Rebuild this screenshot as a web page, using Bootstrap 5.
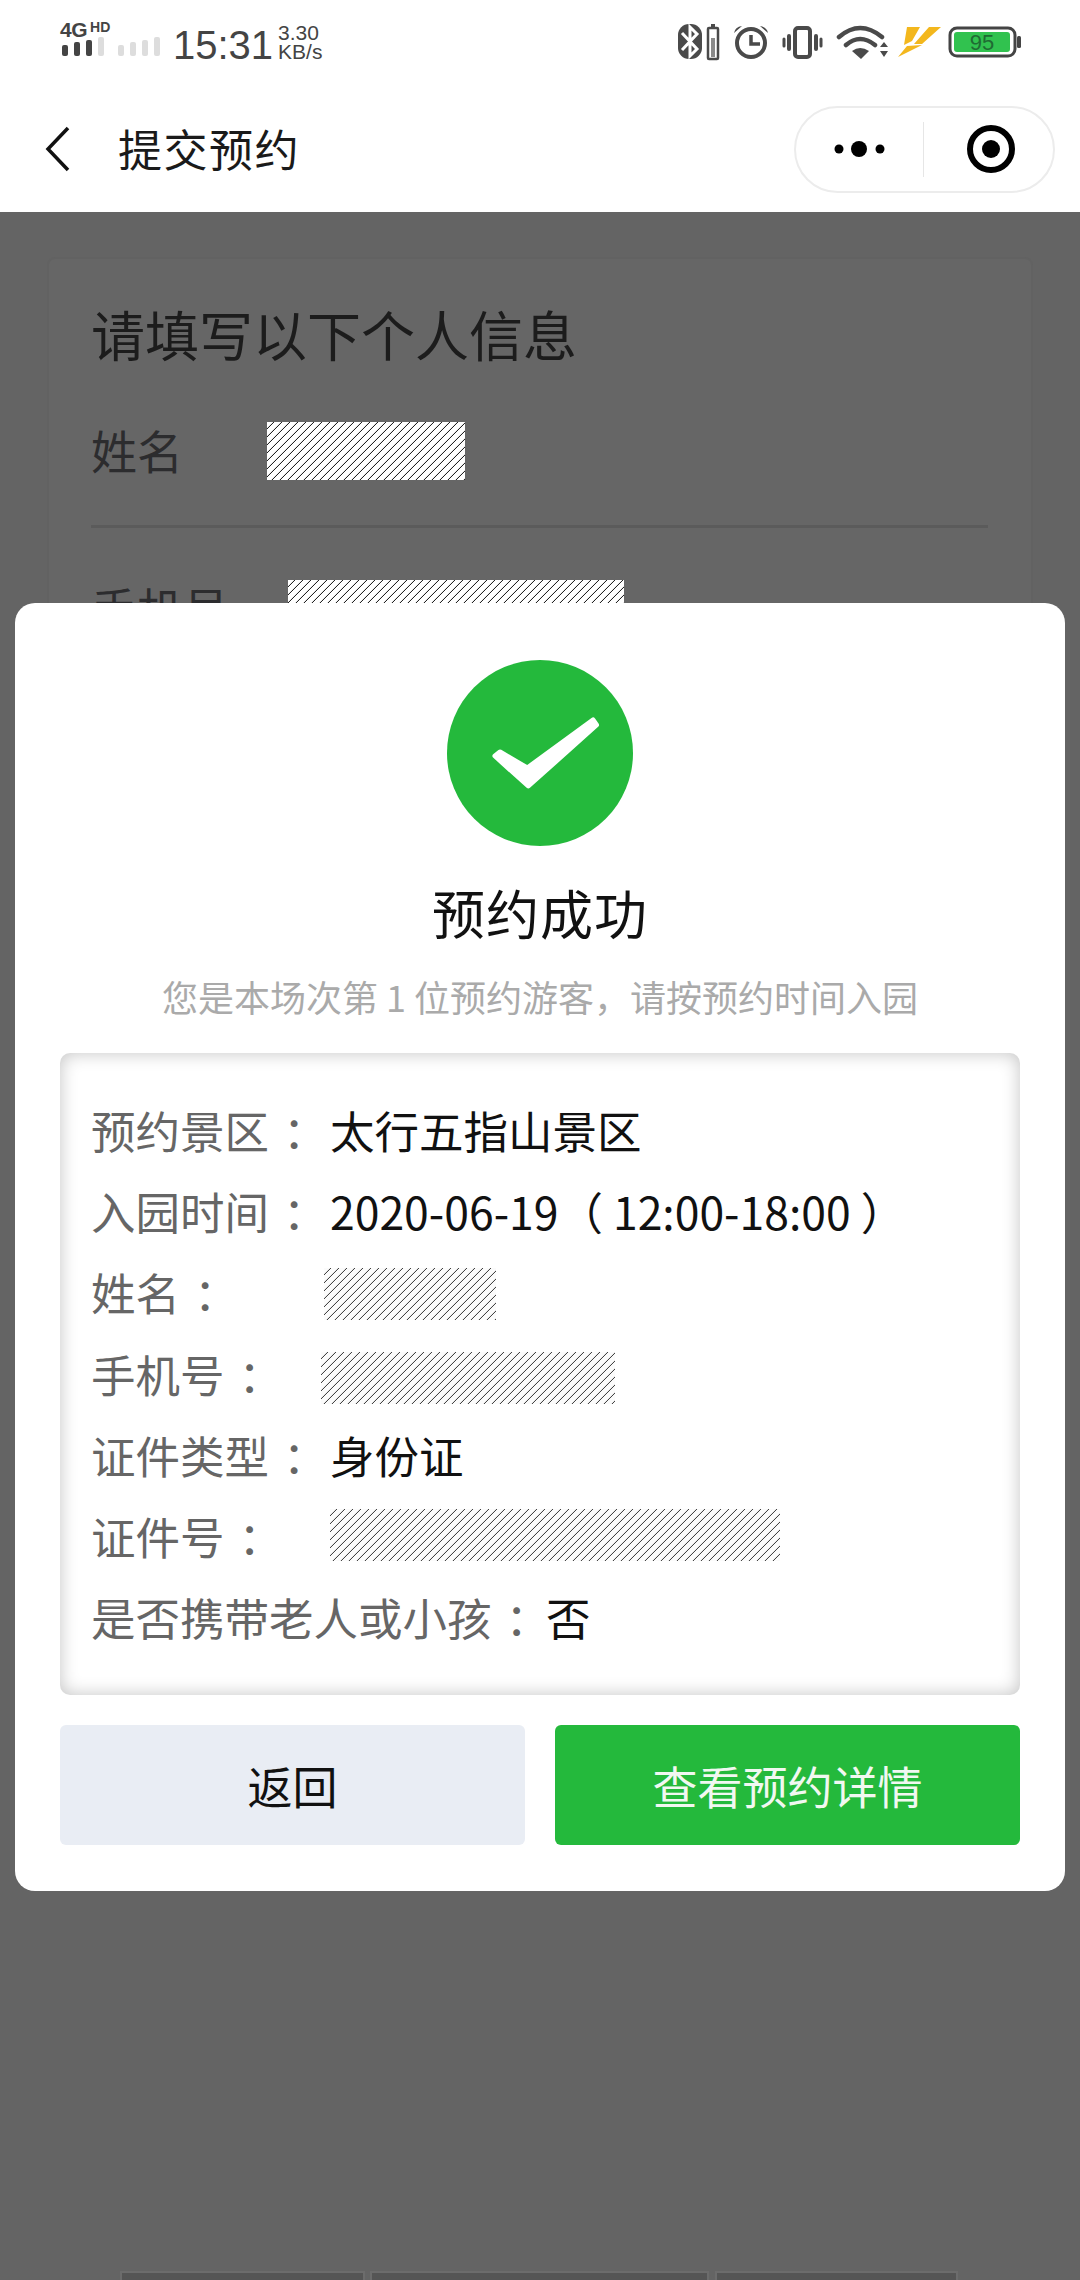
<!DOCTYPE html>
<html lang="zh-CN">
<head>
    <meta charset="UTF-8">
    <meta name="viewport" content="width=device-width, initial-scale=1.0">
    <title>提交预约</title>
    <link rel="stylesheet" href="https://cdn.jsdelivr.net/npm/bootstrap@5.3.2/dist/css/bootstrap.min.css">
    <style>
        body {
            margin: 0;
            width: 1080px;
            height: 2280px;
            overflow: hidden;
            background: #646464;
            font-family: "Noto Sans CJK SC", "Liberation Sans", sans-serif;
        }
        .phone { position: relative; height: 2280px; }

        /* status bar */
        .status-bar { height: 78px; padding: 22px 58px 0 60px; background: #fff; color: #444; }
        .net-col { width: 103px; }
        .net-4g { font: bold 21px/15px "Liberation Sans", sans-serif; letter-spacing: -0.5px; }
        .net-hd { font: bold 14px/10px "Liberation Sans", sans-serif; margin-left: 3px; }
        .clock { font: 40px/1 "Liberation Sans", sans-serif; margin: 3px 0 0 10px; }
        .speed { font: 21px/19px "Liberation Sans", sans-serif; margin: 1px 0 0 5px; }

        /* nav */
        .top-nav { height: 134px; background: #fff; padding: 0 25px 0 45px; }
        .top-back { margin-top: 8px; }
        .top-title { font-size: 44px; line-height: 1; margin: 6px 0 0 47px; color: #1a1a1a; letter-spacing: 1.5px; }
        .capsule { width: 261px; height: 87px; border: 2px solid #ececec; border-radius: 44px; margin-top: 8px; }
        .capsule-half { width: 132px; padding-left: 2px; }
        .capsule-half-end { width: 134px; padding-left: 6px; }
        .capsule-line { width: 1px; height: 55px; background: #e6e6e6; }

        /* page behind the dialog */
        .back-card { margin: 45px 47px 0; height: 1500px; padding: 42px 43px 42px 42px; background: #666; border: 2px solid #626262; border-radius: 8px; }
        .back-title { font-size: 54px; line-height: 66px; color: #1c1c1c; margin-bottom: 55px; }
        .back-row { height: 58px; color: #2c2c2e; font-size: 46px; line-height: 54px; }
        .back-label { width: 176px; }
        .back-label-wide { width: 197px; }
        .back-line { height: 3px; background: #5b5b5b; margin: 45px 0 52px; }

        /* redacted blocks */
        .mask-solid { background: repeating-linear-gradient(135deg, #fff 0 4.2px, #222 4.6px 5.2px, #fff 5.657px); }
        .mask-thin { background: repeating-linear-gradient(135deg, #fbfbfb 0 4.2px, #444 4.6px 5.2px, #fbfbfb 5.657px); height: 52px; }
        .mask-name { width: 198px; height: 58px; }
        .mask-phone { width: 336px; height: 42px; }

        /* dialog */
        .result-dialog { position: absolute; left: 15px; top: 603px; width: 1050px; height: 1288px; padding: 57px 45px 0; background: #fff; border-radius: 20px; }
        .result-title { font-size: 53px; line-height: 70px; letter-spacing: 1px; margin: 31px 0 0; color: #111; font-weight: 400; }
        .result-sub { font-size: 36px; line-height: 46px; color: #aaa; margin: 26px 0 34px; white-space: nowrap; }
        .info-box { height: 642px; padding: 55px 32px 0 31px; border-radius: 10px; box-shadow: inset 0 0 18px rgba(0, 0, 0, .24); }
        .info-row { height: 81.2px; font-size: 44.5px; line-height: 1; color: #111; white-space: nowrap; }
        .info-label { width: 230px; color: #666; flex: none; }
        .info-label-long { color: #666; }
        .info-val { margin-left: 9px; }
        .centered-punct { font-family: "Noto Sans CJK TC", sans-serif; }
        .colon-mark { font-family: "Noto Sans CJK TC", sans-serif; margin: 0 -4px 0 14px; }
        .mask-a { width: 172px; margin-left: 3px; margin-top: -2px; }
        .mask-b { width: 294px; }
        .mask-c { width: 450px; margin-left: 9px; margin-top: -5px; }
        .action-row { margin-top: 30px; gap: 30px; }
        .action-btn { flex: 1; height: 120px; border: 0; border-radius: 6px; font-size: 45px; padding: 0; line-height: 1; }
        .btn-back { background: #e9edf4; color: #111; }
        .btn-detail { background: #24b93c; color: #f1f8f1; }

        /* tab bar peeking out at the bottom */
        .tab-stub { position: absolute; top: 2271px; height: 12px; background: #555; border: 2px solid #6c6c6c; border-bottom: 0; }
        .tab-1 { left: 120px; width: 245px; }
        .tab-2 { left: 370px; width: 339px; }
        .tab-3 { left: 715px; width: 243px; }
    </style>
</head>
<body>
<div class="phone">
    <div class="status-bar d-flex justify-content-between align-items-start">
        <div class="d-flex">
            <div class="net-col">
                <div class="d-flex align-items-start"><span class="net-4g">4G</span><span class="net-hd">HD</span></div>
                <svg class="d-block" width="103" height="20" viewBox="0 0 103 20">
                    <rect x="2" y="8" width="6" height="11" rx="2" fill="#444"/>
                    <rect x="14" y="5" width="6" height="14" rx="2" fill="#444"/>
                    <rect x="26" y="3" width="6" height="16" rx="2" fill="#444"/>
                    <rect x="38" y="0" width="6" height="19" rx="2" fill="#ddd"/>
                    <rect x="58" y="8" width="6" height="11" rx="2" fill="#ddd"/>
                    <rect x="70" y="5" width="6" height="14" rx="2" fill="#ddd"/>
                    <rect x="82" y="3" width="6" height="16" rx="2" fill="#ddd"/>
                    <rect x="94" y="0" width="6" height="19" rx="2" fill="#ddd"/>
                </svg>
            </div>
            <div class="clock">15:31</div>
            <div class="speed">3.30<br>KB/s</div>
        </div>
        <svg class="d-block" width="346" height="40" viewBox="676 22 346 40">
            <!-- bluetooth -->
            <rect x="678" y="24" width="24" height="35" rx="11" fill="#4a4a4a"/>
            <path d="M682 33l15 16-7 7V27l7 7-15 16" fill="none" stroke="#fff" stroke-width="3"/>
            <!-- small battery -->
            <rect x="708" y="28" width="10" height="31" rx="1" fill="none" stroke="#4a4a4a" stroke-width="2.5"/>
            <rect x="711" y="24" width="4" height="4" fill="#4a4a4a"/>
            <rect x="711" y="38" width="4" height="19" fill="#8a8a8a"/>
            <!-- alarm -->
            <circle cx="751" cy="43" r="14" fill="none" stroke="#4a4a4a" stroke-width="4"/>
            <path d="M751 35v9h9" fill="none" stroke="#4a4a4a" stroke-width="3.5"/>
            <path d="M734 33q1-6 8-7zM768 33q-1-6-8-7z" fill="#4a4a4a"/>
            <!-- vibrate -->
            <rect x="795" y="28" width="15" height="29" rx="3" fill="none" stroke="#4a4a4a" stroke-width="4"/>
            <path d="M789 36v13M816 36v13" stroke="#4a4a4a" stroke-width="4" stroke-linecap="round"/>
            <path d="M784 39v7M821 39v7" stroke="#4a4a4a" stroke-width="3" stroke-linecap="round"/>
            <!-- wifi -->
            <path d="M839 37q21-18 43 0M846 45q14-12 29 0" fill="none" stroke="#4a4a4a" stroke-width="4.5" stroke-linecap="round"/>
            <path d="M852 51q8-6 17 0l-8 8z" fill="#4a4a4a"/>
            <path d="M880 47l4-5 4 5zM880 51h8l-4 6z" fill="#4a4a4a"/>
            <!-- fast charge -->
            <path d="M907 27h13l-8 14 -8 4zM929 27h12l-19 17h-8zM907 46l15-1-24 12z" fill="#f3b71d"/>
            <!-- battery -->
            <rect x="950" y="28" width="65" height="28" rx="7" fill="#fff" stroke="#444" stroke-width="3"/>
            <rect x="954" y="32" width="56" height="20" rx="3" fill="#31c24f"/>
            <rect x="1017" y="36" width="4" height="12" rx="1.5" fill="#444"/>
            <text x="982" y="50" text-anchor="middle" font-family="Liberation Sans, sans-serif" font-size="22" fill="#1f6b33">95</text>
        </svg>
    </div>

    <div class="top-nav d-flex align-items-center">
        <svg class="top-back" width="26" height="46" viewBox="0 0 26 46"><path d="M23 2 3 23l20 21" fill="none" stroke="#111" stroke-width="3.5"/></svg>
        <div class="top-title flex-grow-1">提交预约</div>
        <div class="capsule d-flex align-items-center">
            <div class="capsule-half d-flex justify-content-center">
                <svg width="60" height="20" viewBox="0 0 60 20"><circle cx="9" cy="10" r="4.5"/><circle cx="29" cy="10" r="8"/><circle cx="50" cy="10" r="4.5"/></svg>
            </div>
            <div class="capsule-line"></div>
            <div class="capsule-half-end d-flex justify-content-center">
                <svg width="50" height="50" viewBox="0 0 50 50"><circle cx="25" cy="25" r="21" fill="none" stroke="#000" stroke-width="6"/><circle cx="25" cy="25" r="9"/></svg>
            </div>
        </div>
    </div>

    <div class="back-card">
        <div class="back-title">请填写以下个人信息</div>
        <div class="back-row d-flex">
            <div class="back-label">姓名</div>
            <div class="mask-solid mask-name"></div>
        </div>
        <div class="back-line"></div>
        <div class="back-row d-flex">
            <div class="back-label-wide">手机号</div>
            <div class="mask-solid mask-phone"></div>
        </div>
    </div>

    <div class="result-dialog">
        <div class="text-center">
            <svg class="d-block mx-auto" width="186" height="186" viewBox="0 0 186 186">
                <circle cx="93" cy="93" r="93" fill="#24b93c"/>
                <path d="M48 96 53 92 80.3 108 146 60 149.5 65 81.3 126Z" fill="#fff" stroke="#fff" stroke-width="5" stroke-linejoin="round"/>
            </svg>
            <h1 class="result-title">预约成功</h1>
            <p class="result-sub">您是本场次第 1 位预约游客<span class="centered-punct">，</span>请按预约时间入园</p>
        </div>
        <div class="info-box">
            <div class="info-row d-flex"><div class="info-label">预约景区<span class="colon-mark">：</span></div><div class="info-val">太行五指山景区</div></div>
            <div class="info-row d-flex"><div class="info-label">入园时间<span class="colon-mark">：</span></div><div class="info-val">2020-06-19（ 12:00-18:00 ）</div></div>
            <div class="info-row d-flex"><div class="info-label">姓名<span class="colon-mark">：</span></div><div class="mask-thin mask-a"></div></div>
            <div class="info-row d-flex"><div class="info-label">手机号<span class="colon-mark">：</span></div><div class="mask-thin mask-b"></div></div>
            <div class="info-row d-flex"><div class="info-label">证件类型<span class="colon-mark">：</span></div><div class="info-val">身份证</div></div>
            <div class="info-row d-flex"><div class="info-label">证件号<span class="colon-mark">：</span></div><div class="mask-thin mask-c"></div></div>
            <div class="info-row d-flex"><div class="info-label-long">是否携带老人或小孩<span class="colon-mark">：</span></div><div>否</div></div>
        </div>
        <div class="action-row d-flex">
            <button type="button" class="btn action-btn btn-back">返回</button>
            <button type="button" class="btn action-btn btn-detail">查看预约详情</button>
        </div>
    </div>

    <div class="tab-stub tab-1"></div>
    <div class="tab-stub tab-2"></div>
    <div class="tab-stub tab-3"></div>
</div>
<script src="https://cdn.jsdelivr.net/npm/bootstrap@5.3.2/dist/js/bootstrap.bundle.min.js"></script>
</body>
</html>
